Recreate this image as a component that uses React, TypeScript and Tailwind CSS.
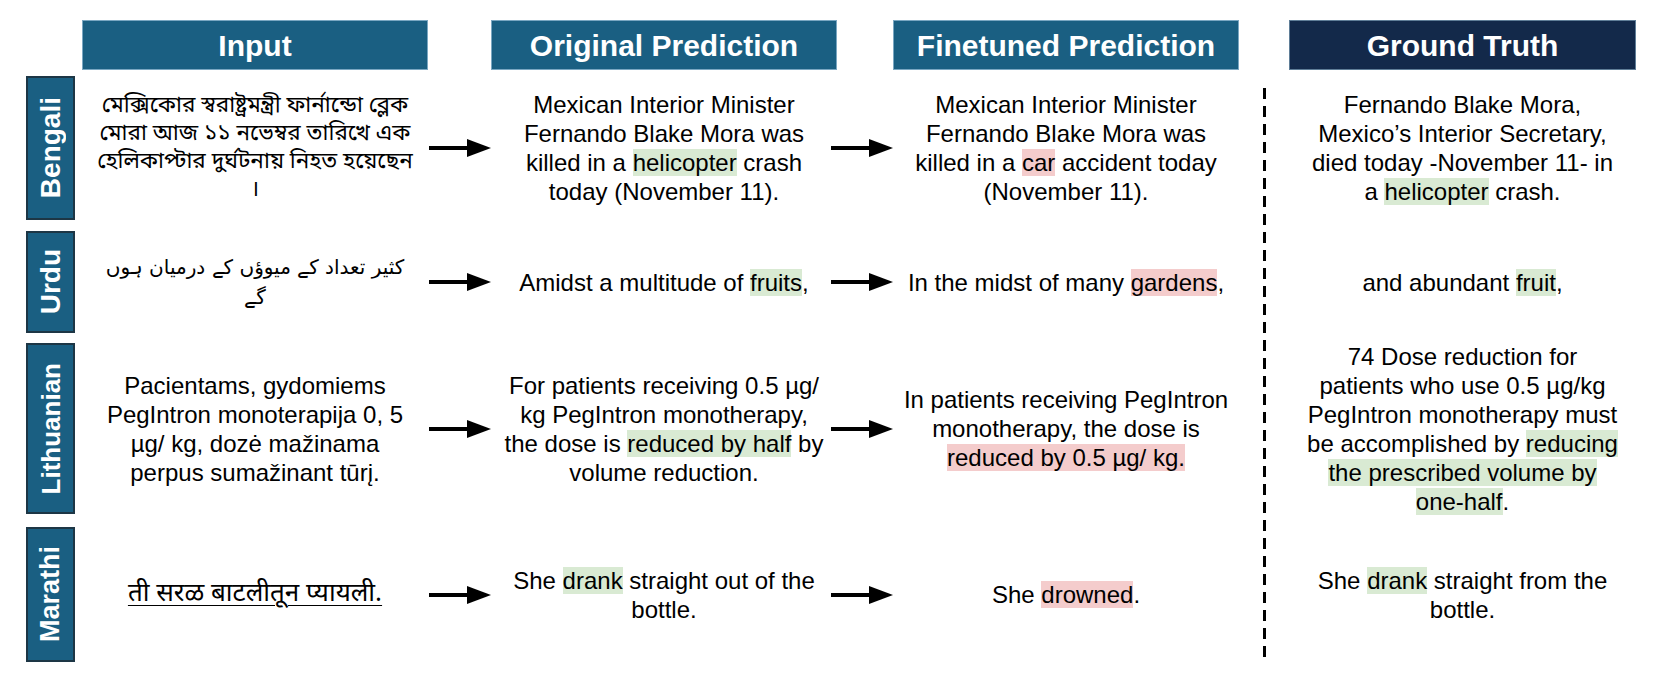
import type { ReactNode } from "react";

// light highlight helpers
function G({ children }: { children: ReactNode }) {
  return <span className="bg-[#d9ead3] [box-decoration-break:clone]">{children}</span>;
}

function R({ children }: { children: ReactNode }) {
  return <span className="bg-[#f4cccc] [box-decoration-break:clone]">{children}</span>;
}

function Arrow() {
  return (
    <svg width="62" height="20" viewBox="0 0 62 20" className="shrink-0">
      <line x1="0" y1="10" x2="40" y2="10" stroke="#000" strokeWidth="4" />
      <polygon points="38,1 62,10 38,19" fill="#000" />
    </svg>
  );
}

type Row = {
  label: string;
  rowCls: string;
  labelCls: string;
  input: ReactNode;
  orig: ReactNode;
  fine: ReactNode;
  truth: ReactNode;
};

const rows: Row[] = [
  {
    label: "Bengali",
    rowCls: "mt-[6px] h-[144px]",
    labelCls: "text-[28px]",
    input: (
      <p className="font-['Noto_Sans_Bengali','Lohit_Bengali','FreeSerif',sans-serif] text-[22.5px] leading-[28px] font-normal">
        মেক্সিকোর স্বরাষ্ট্রমন্ত্রী ফার্নান্ডো ব্লেক
        <br />
        মোরা আজ ১১ নভেম্বর তারিখে এক
        <br />
        হেলিকাপ্টার দুর্ঘটনায় নিহত হয়েছেন
        <br />।
      </p>
    ),
    orig: (
      <p>
        Mexican Interior Minister
        <br />
        Fernando Blake Mora was
        <br />
        killed in a <G>helicopter</G> crash
        <br />
        today (November 11).
      </p>
    ),
    fine: (
      <p>
        Mexican Interior Minister
        <br />
        Fernando Blake Mora was
        <br />
        killed in a <R>car</R> accident today
        <br />
        (November 11).
      </p>
    ),
    truth: (
      <p>
        Fernando Blake Mora,
        <br />
        Mexico’s Interior Secretary,
        <br />
        died today -November 11- in
        <br />a <G>helicopter</G> crash.
      </p>
    ),
  },
  {
    label: "Urdu",
    rowCls: "mt-[11px] h-[102px]",
    labelCls: "text-[28px]",
    input: (
      <p
        dir="rtl"
        className="font-['DejaVu_Sans','Noto_Sans',sans-serif] text-[20px] leading-[30px]"
      >
        کثیر تعداد کے میوؤں کے درمیان ہوں
        <br />
        گے
      </p>
    ),
    orig: (
      <p>
        Amidst a multitude of <G>fruits</G>,
      </p>
    ),
    fine: (
      <p>
        In the midst of many <R>gardens</R>,
      </p>
    ),
    truth: (
      <p>
        and abundant <G>fruit</G>,
      </p>
    ),
  },
  {
    label: "Lithuanian",
    rowCls: "mt-[10px] h-[171px]",
    labelCls: "text-[26px]",
    input: (
      <p>
        Pacientams, gydomiems
        <br />
        PegIntron monoterapija 0, 5
        <br />
        µg/ kg, dozė mažinama
        <br />
        perpus sumažinant tūrį.
      </p>
    ),
    orig: (
      <p>
        For patients receiving 0.5 µg/
        <br />
        kg PegIntron monotherapy,
        <br />
        the dose is <G>reduced by half</G> by
        <br />
        volume reduction.
      </p>
    ),
    fine: (
      <p>
        In patients receiving PegIntron
        <br />
        monotherapy, the dose is
        <br />
        <R>reduced by 0.5 µg/ kg.</R>
      </p>
    ),
    truth: (
      <p>
        74 Dose reduction for
        <br />
        patients who use 0.5 µg/kg
        <br />
        PegIntron monotherapy must
        <br />
        be accomplished by <G>reducing</G>
        <br />
        <G>the prescribed volume by</G>
        <br />
        <G>one-half</G>.
      </p>
    ),
  },
  {
    label: "Marathi",
    rowCls: "mt-[13px] h-[135px]",
    labelCls: "text-[27px]",
    input: (
      <p className="font-['Noto_Sans_Devanagari','Lohit_Devanagari','FreeSerif',sans-serif] text-[26px] leading-[30px] underline underline-offset-4 decoration-1">
        ती सरळ बाटलीतून प्यायली.
      </p>
    ),
    orig: (
      <p>
        She <G>drank</G> straight out of the
        <br />
        bottle.
      </p>
    ),
    fine: (
      <p>
        She <R>drowned</R>.
      </p>
    ),
    truth: (
      <p>
        She <G>drank</G> straight from the
        <br />
        bottle.
      </p>
    ),
  },
];

function Header({ title, dark }: { title: string; dark?: boolean }) {
  return (
    <div
      className={
        dark
          ? "h-[50px] flex items-center justify-center bg-[#13294a] border border-[#5f7d97] text-white text-[30px] font-bold"
          : "h-[50px] flex items-center justify-center bg-[#1a5f82] border border-[#7aa7c2] text-white text-[30px] font-bold"
      }
    >
      {title}
    </div>
  );
}

export default function App() {
  return (
    <div className="w-[1661px] h-[685px] bg-white text-black font-['Liberation_Sans',Arial,sans-serif] text-[24px] leading-[29px] pt-[20px] pl-[26px] flex">
      {/* left block: labels, input, predictions */}
      <div className="flex flex-col">
        <div className="flex h-[50px]">
          <div className="w-[56px]" />
          <div className="w-[346px]">
            <Header title="Input" />
          </div>
          <div className="w-[63px]" />
          <div className="w-[346px]">
            <Header title="Original Prediction" />
          </div>
          <div className="w-[56px]" />
          <div className="w-[346px]">
            <Header title="Finetuned Prediction" />
          </div>
        </div>

        {rows.map((r) => (
          <div key={r.label} className={`flex ${r.rowCls}`}>
            <div className="w-[49px] h-full bg-[#1a5f82] border-2 border-[#1d3645] flex items-center justify-center">
              <span
                className={`[writing-mode:vertical-rl] rotate-180 text-white font-bold leading-none ${r.labelCls}`}
              >
                {r.label}
              </span>
            </div>
            <div className="w-[7px]" />
            <div className="w-[346px] flex items-center justify-center text-center">{r.input}</div>
            <div className="w-[63px] flex items-center justify-end">
              <Arrow />
            </div>
            <div className="w-[346px] flex items-center justify-center text-center">{r.orig}</div>
            <div className="w-[56px] flex items-center justify-end">
              <Arrow />
            </div>
            <div className="w-[346px] flex items-center justify-center text-center">{r.fine}</div>
          </div>
        ))}
      </div>

      {/* divider */}
      <div className="w-[50px] flex flex-col items-center">
        <div className="h-[50px]" />
        <div className="mt-[18px] w-[3px] h-[574px] bg-[linear-gradient(to_bottom,#000_60%,transparent_60%)] bg-[length:3px_18px]" />
      </div>

      {/* ground truth */}
      <div className="w-[347px] flex flex-col">
        <Header title="Ground Truth" dark />
        {rows.map((r) => (
          <div key={r.label} className={`flex items-center justify-center text-center ${r.rowCls}`}>
            {r.truth}
          </div>
        ))}
      </div>
    </div>
  );
}
